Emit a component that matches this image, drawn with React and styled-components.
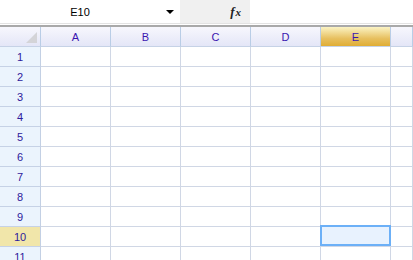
import React from "react";
import styled, { createGlobalStyle, css } from "styled-components";

const Global = createGlobalStyle`
  html, body { margin: 0; padding: 0; background: #fff; overflow: hidden; }
  body { font-family: "Liberation Sans", Arial, sans-serif; }
  *, *::before, *::after { box-sizing: border-box; }
`;

const Page = styled.div`
  width: 413px;
  height: 260px;
  overflow: hidden;
  display: flex;
  flex-direction: column;
  background: #fff;
`;

const FormulaBar = styled.div`
  height: 27px;
  flex: none;
  display: flex;
  border-bottom: 2px solid #a9a9a9;
  box-shadow: inset 0 -1px 0 #fff, inset 0 -2px 0 #e3e3e3;
`;

const NameBox = styled.div`
  width: 180px;
  height: 23px;
  display: flex;
  align-items: center;
  font-size: 11px;
  color: #000;
`;

const NameText = styled.span`
  width: 160px;
  text-align: center;
`;

const Arrow = styled.span`
  width: 0;
  height: 0;
  margin-left: 6px;
  border-left: 4px solid transparent;
  border-right: 4px solid transparent;
  border-top: 4px solid #000;
`;

const FxButton = styled.div`
  width: 70px;
  height: 23px;
  background: #f0f0f0;
  display: flex;
  align-items: center;
  justify-content: flex-end;
  padding-right: 9px;
  font-family: "Liberation Serif", "Times New Roman", serif;
  font-style: italic;
  font-weight: bold;
  color: #222;
  font-size: 13px;
`;

const Sub = styled.span`
  font-size: 11px;
  margin-left: 1px;
`;

const FormulaInput = styled.div`
  flex: 1;
  height: 23px;
  background: #fff;
`;

const Grid = styled.div`
  display: grid;
  grid-template-columns: 41px repeat(5, 70px) 1fr;
  grid-auto-rows: 20px;
`;

const headerGradient = css`
  background: linear-gradient(#f7f7fd, #e4e6f7);
`;

const ColHeader = styled.div`
  ${headerGradient}
  border-right: 1px solid #b9cde6;
  border-bottom: 1px solid #c6d2e6;
  display: flex;
  align-items: center;
  justify-content: center;
  font-size: 11px;
  color: #3a16b0;
  ${(p) =>
    p.$active &&
    css`
      background: linear-gradient(#fbf3c4, #e7c060 60%, #e0ad34);
    `}
`;

const Corner = styled.div`
  ${headerGradient}
  border-right: 1px solid #b9cde6;
  border-bottom: 1px solid #c6d2e6;
  position: relative;
`;

const Triangle = styled.span`
  position: absolute;
  right: 3px;
  bottom: 3px;
  width: 0;
  height: 0;
  border-left: 11px solid transparent;
  border-bottom: 11px solid #d4d4d8;
`;

const RowHeader = styled.div`
  background: ${(p) => (p.$active ? "#f1e6aa" : "#ebf4fd")};
  border-right: 1px solid #c3d0e4;
  border-bottom: 1px solid #c6d2e6;
  display: flex;
  align-items: center;
  justify-content: center;
  font-size: 11px;
  color: #2e1a9c;
`;

const Cell = styled.div`
  border-right: 1px solid #d0d7e5;
  border-bottom: 1px solid #d0d7e5;
  position: relative;
  ${(p) =>
    p.$selected &&
    css`
      &::after {
        content: "";
        position: absolute;
        left: -1px;
        top: -2px;
        width: 71px;
        height: 21px;
        border: 2px solid #6cb0f7;
        background: #e8f2fe;
        z-index: 1;
      }
    `}
`;

const cols = ["A", "B", "C", "D", "E", ""];
const rows = Array.from({ length: 11 }, (_, i) => i + 1);

export default function App() {
  return (
    <Page>
      <Global />
      <FormulaBar>
        <NameBox>
          <NameText>E10</NameText>
          <Arrow />
        </NameBox>
        <FxButton>
          f<Sub>x</Sub>
        </FxButton>
        <FormulaInput />
      </FormulaBar>
      <Grid>
        <Corner>
          <Triangle />
        </Corner>
        {cols.map((c, i) => (
          <ColHeader key={i} $active={c === "E"}>
            {c}
          </ColHeader>
        ))}
        {rows.map((r) => (
          <React.Fragment key={r}>
            <RowHeader $active={r === 10}>{r}</RowHeader>
            {cols.map((c, i) => (
              <Cell key={i} $selected={r === 10 && c === "E"} />
            ))}
          </React.Fragment>
        ))}
      </Grid>
    </Page>
  );
}
